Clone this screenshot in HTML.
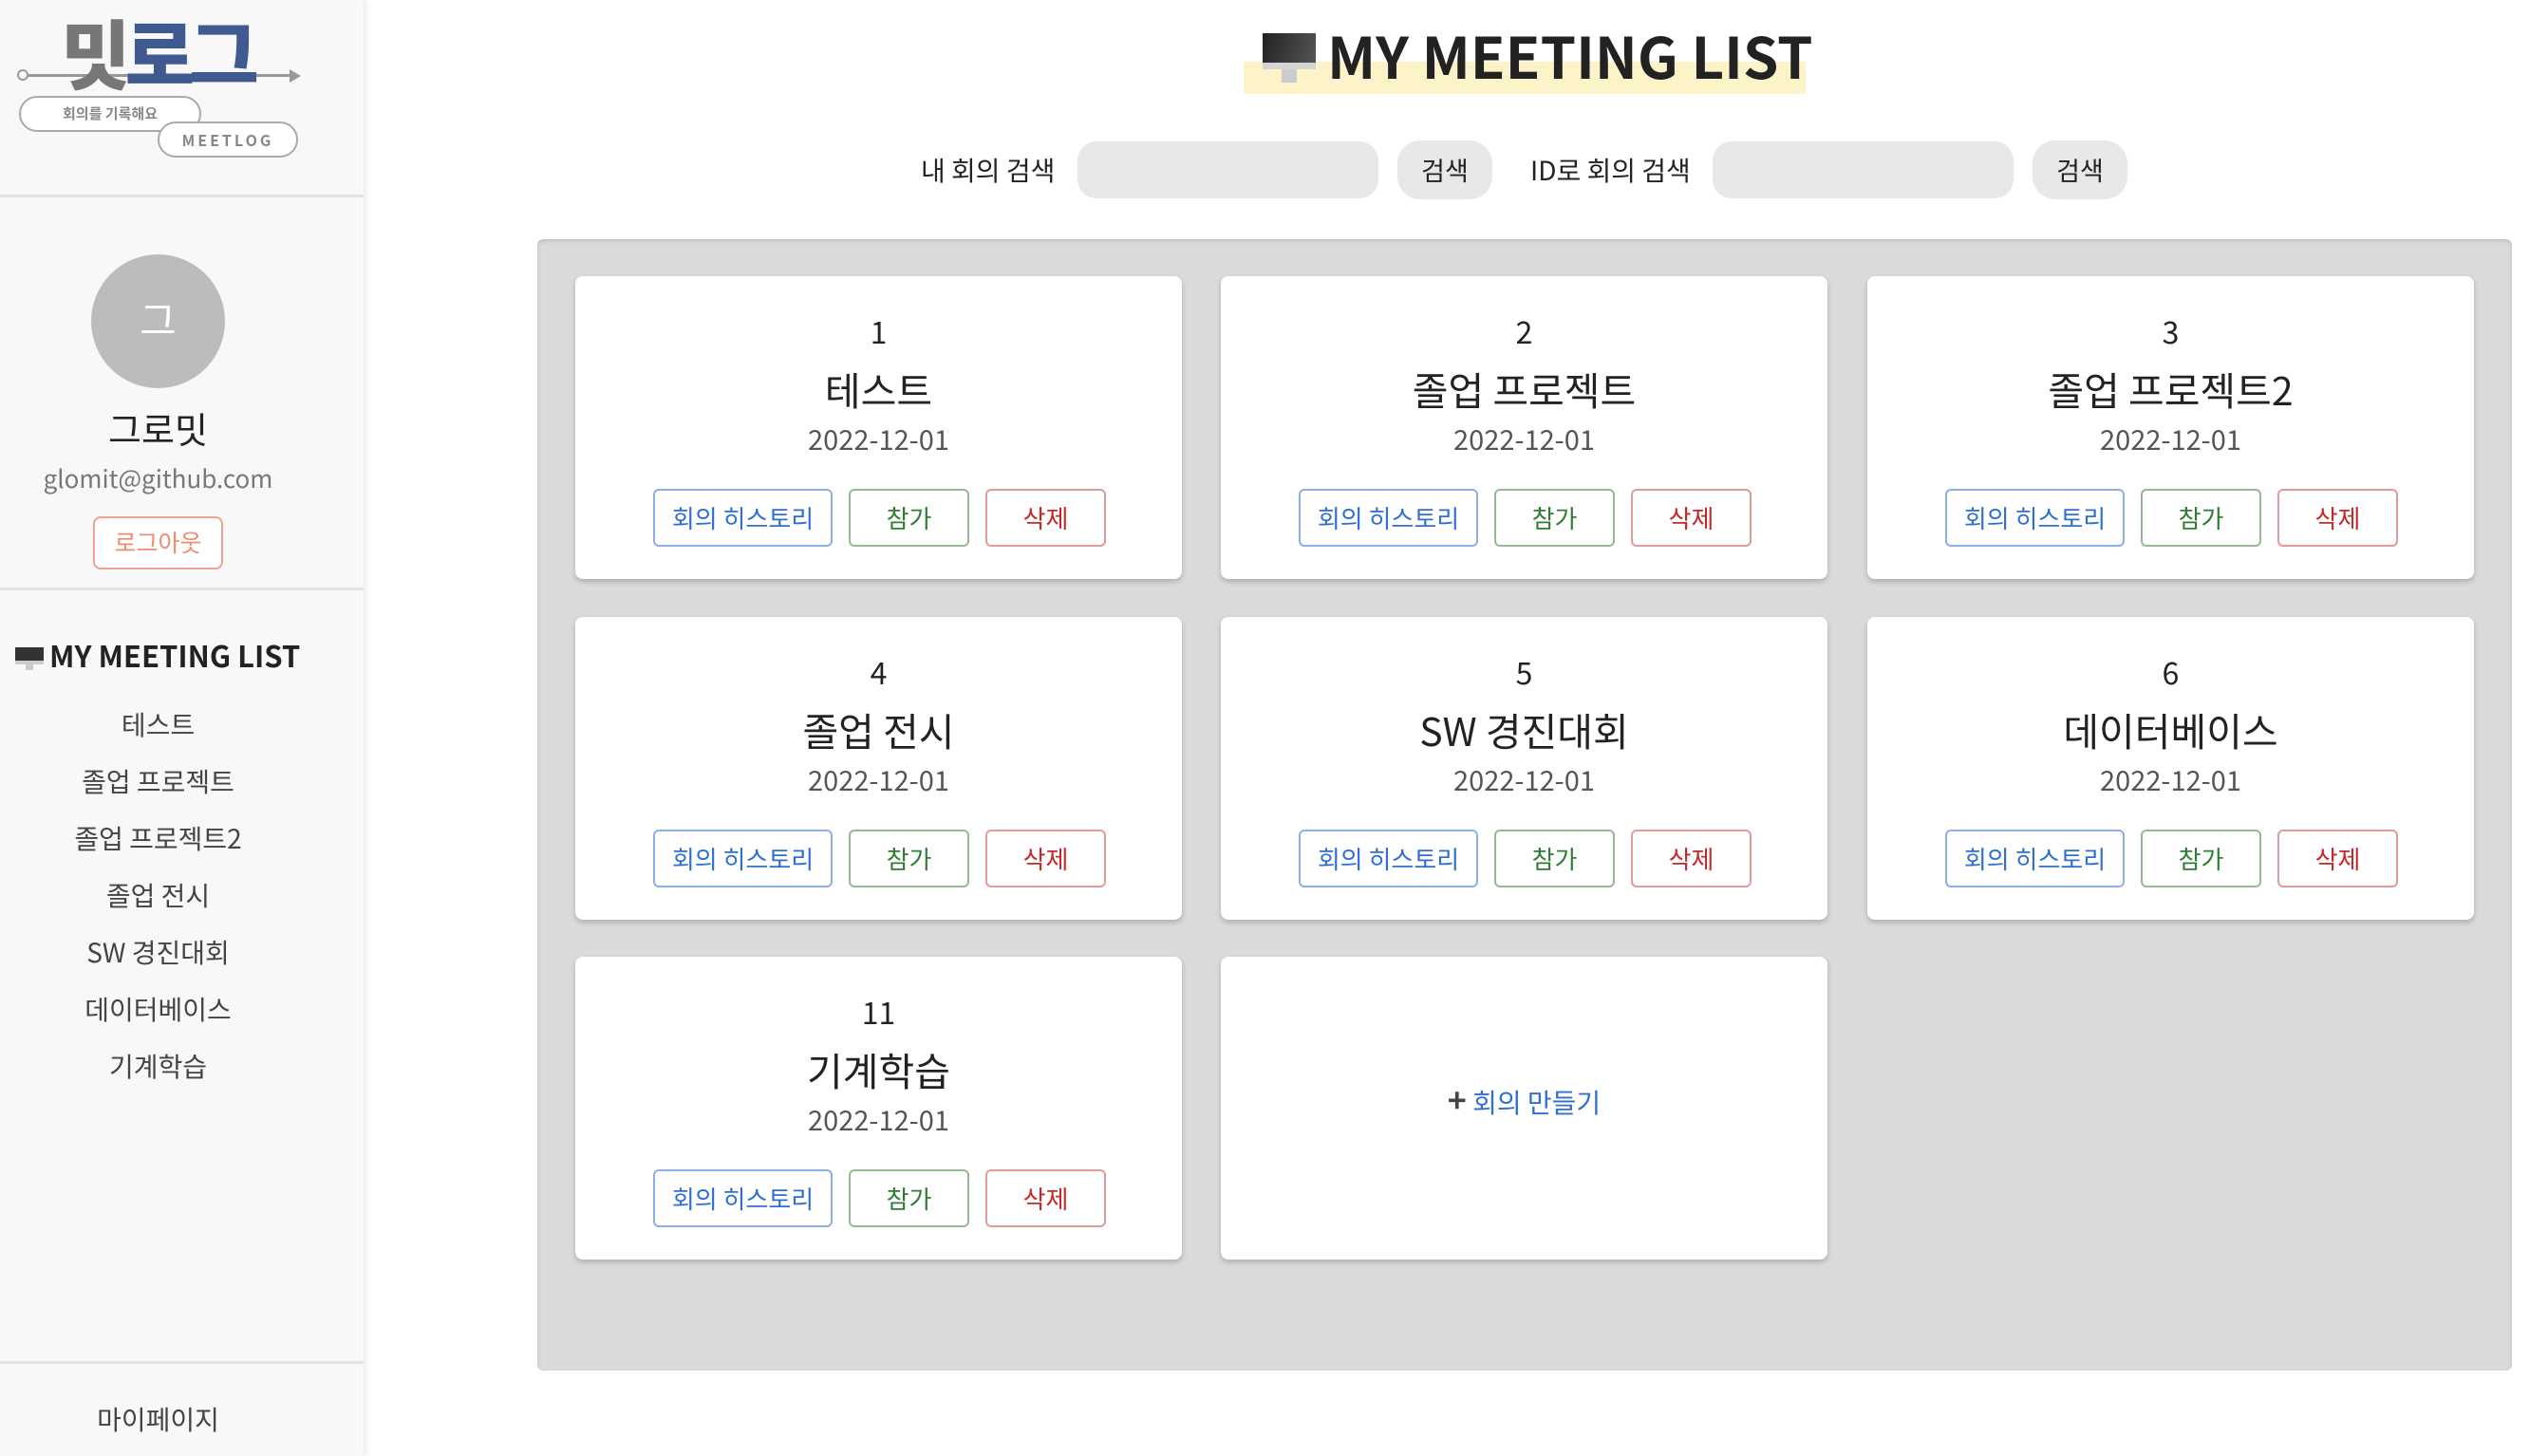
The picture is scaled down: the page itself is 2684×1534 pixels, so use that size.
<!DOCTYPE html>
<html><head><meta charset="utf-8"><style>
*{box-sizing:border-box;margin:0;padding:0}
body{width:2684px;height:1534px;background:#fff;font-family:"Noto Sans CJK KR","Liberation Sans",sans-serif;position:relative;overflow:hidden;color:#222}
.abs{position:absolute}
.side{left:0;top:0;width:383px;height:1534px;background:#f8f8f8;box-shadow:3px 0 6px rgba(0,0,0,.08)}
.hr{position:absolute;left:0;width:383px;height:3px;background:#e2e2e2}
.c{text-align:center}
.mon{display:inline-block;position:relative;vertical-align:middle}
.list div{position:absolute;left:0;width:333px;text-align:center;font-size:28px;color:#444}
.card{position:absolute;width:639px;height:319px;background:#fff;border-radius:8px;box-shadow:0 3px 6px rgba(0,0,0,.2)}
.card .n{position:absolute;top:30px;width:100%;text-align:center;font-size:32px;color:#222;line-height:56px}
.card .t{position:absolute;top:88px;width:100%;text-align:center;font-size:41px;color:#222;line-height:60px}
.card .d{position:absolute;top:148px;width:100%;text-align:center;font-size:29px;color:#555;line-height:46px}
.b{position:absolute;top:224px;height:61px;border-radius:6px;background:#fff;font-size:26px;text-align:center;line-height:57px}
.b1{left:82px;width:189px;border:2px solid #8ab0e8;color:#2f6fd0}
.b2{left:288px;width:127px;border:2px solid #95b992;color:#2e7d32}
.b3{left:432px;width:127px;border:2px solid #e39a9a;color:#c62828}
.inp{background:#e8e8e8;border-radius:20px;height:60px;top:149px}
.sb{background:#e8e8e8;border-radius:24px;height:62px;top:148px;width:100px;text-align:center;line-height:62px;font-size:27px}
.lbl{top:155px;font-size:28px;line-height:48px}
</style></head><body>
<div class="abs side">
  <div class="abs" style="left:20px;top:78px;width:290px;height:3px;background:#999"></div>
  <div class="abs" style="left:18px;top:73px;width:12px;height:12px;border:2px solid #999;border-radius:50%;background:#f8f8f8"></div>
  <div class="abs" style="left:305px;top:73px;width:0;height:0;border-left:12px solid #999;border-top:7px solid transparent;border-bottom:7px solid transparent"></div>
  <div class="abs" style="left:64px;top:4px;font-size:80px;font-weight:900;line-height:100px;letter-spacing:-6px"><span style="color:#777">밋</span><span style="color:#3f5a91">로그</span></div>
  <div class="abs" style="left:20px;top:101px;width:192px;height:38px;border:2px solid #aaa;border-radius:19px;background:#fff;font-size:15px;font-weight:bold;color:#888;text-align:center;line-height:34px">회의를 기록해요</div>
  <div class="abs" style="left:166px;top:128px;width:148px;height:38px;border:2px solid #aaa;border-radius:19px;background:#fff;font-size:16px;font-weight:bold;color:#888;text-align:center;line-height:34px;letter-spacing:3px">MEETLOG</div>
  <div class="hr" style="top:205px"></div>
  <div class="abs" style="left:96px;top:268px;width:141px;height:141px;border-radius:50%;background:#bcbcbc;color:#fff;font-size:42px;text-align:center;line-height:136px">그</div>
  <div class="abs c" style="left:0;top:424px;width:333px;font-size:38px;line-height:54px">그로밋</div>
  <div class="abs c" style="left:0;top:485px;width:333px;font-size:26px;color:#777;line-height:38px">glomit@github.com</div>
  <div class="abs c" style="left:98px;top:544px;width:137px;height:56px;border:2px solid #f0a290;border-radius:8px;background:#fff;color:#f08a70;font-size:25px;line-height:50px">로그아웃</div>
  <div class="hr" style="top:619px"></div>
  <div class="abs" style="left:16px;top:668px;font-size:31px;font-weight:bold;line-height:44px;white-space:nowrap">
    <span class="mon" style="width:30px;height:26px;margin-right:6px"><span class="abs" style="left:0;top:0;width:30px;height:18px;background:#333;border-bottom:4px solid #ccc"></span><span class="abs" style="left:11px;top:18px;width:8px;height:6px;background:#ccc"></span></span>MY MEETING LIST</div>
  <div class="list">
    <div style="top:743px">테스트</div>
    <div style="top:803px">졸업 프로젝트</div>
    <div style="top:863px">졸업 프로젝트2</div>
    <div style="top:923px">졸업 전시</div>
    <div style="top:983px">SW 경진대회</div>
    <div style="top:1043px">데이터베이스</div>
    <div style="top:1103px">기계학습</div>
  </div>
  <div class="hr" style="top:1434px"></div>
  <div class="abs c" style="left:0;top:1474px;width:333px;font-size:28px;color:#444;line-height:42px">마이페이지</div>
</div>

<div class="abs" style="left:1310px;top:65px;width:592px;height:34px;background:#fdf3c8"></div>
<div class="abs" style="left:1330px;top:18px;height:80px;font-size:60px;font-weight:bold;line-height:80px;white-space:nowrap;color:#222">
  <span class="mon" style="width:56px;height:56px;margin-right:12px;top:-4px"><span class="abs" style="left:0;top:0;width:56px;height:38px;background:linear-gradient(110deg,#222,#555);border-bottom:7px solid #d4d4d4"></span><span class="abs" style="left:20px;top:38px;width:16px;height:14px;background:#ccc"></span></span>MY MEETING LIST</div>

<div class="abs lbl" style="left:970px">내 회의 검색</div>
<div class="abs inp" style="left:1135px;width:317px"></div>
<div class="abs sb" style="left:1472px">검색</div>
<div class="abs lbl" style="left:1612px">ID로 회의 검색</div>
<div class="abs inp" style="left:1804px;width:317px"></div>
<div class="abs sb" style="left:2141px">검색</div>

<div class="abs" style="left:566px;top:252px;width:2080px;height:1192px;background:#dadada;border-radius:6px;box-shadow:inset 0 2px 4px rgba(0,0,0,.12)"></div>

<div class="card" style="left:606px;top:291px"><div class="n">1</div><div class="t">테스트</div><div class="d">2022-12-01</div><div class="b b1">회의 히스토리</div><div class="b b2">참가</div><div class="b b3">삭제</div></div>
<div class="card" style="left:1286px;top:291px"><div class="n">2</div><div class="t">졸업 프로젝트</div><div class="d">2022-12-01</div><div class="b b1">회의 히스토리</div><div class="b b2">참가</div><div class="b b3">삭제</div></div>
<div class="card" style="left:1967px;top:291px"><div class="n">3</div><div class="t">졸업 프로젝트2</div><div class="d">2022-12-01</div><div class="b b1">회의 히스토리</div><div class="b b2">참가</div><div class="b b3">삭제</div></div>
<div class="card" style="left:606px;top:650px"><div class="n">4</div><div class="t">졸업 전시</div><div class="d">2022-12-01</div><div class="b b1">회의 히스토리</div><div class="b b2">참가</div><div class="b b3">삭제</div></div>
<div class="card" style="left:1286px;top:650px"><div class="n">5</div><div class="t">SW 경진대회</div><div class="d">2022-12-01</div><div class="b b1">회의 히스토리</div><div class="b b2">참가</div><div class="b b3">삭제</div></div>
<div class="card" style="left:1967px;top:650px"><div class="n">6</div><div class="t">데이터베이스</div><div class="d">2022-12-01</div><div class="b b1">회의 히스토리</div><div class="b b2">참가</div><div class="b b3">삭제</div></div>
<div class="card" style="left:606px;top:1008px"><div class="n">11</div><div class="t">기계학습</div><div class="d">2022-12-01</div><div class="b b1">회의 히스토리</div><div class="b b2">참가</div><div class="b b3">삭제</div></div>
<div class="card" style="left:1286px;top:1008px"><div style="position:absolute;top:128px;width:100%;text-align:center;font-size:28px;line-height:44px;color:#2f6fd0"><span style="color:#444;font-weight:bold;font-size:34px">+</span> 회의 만들기</div></div>
</body></html>
